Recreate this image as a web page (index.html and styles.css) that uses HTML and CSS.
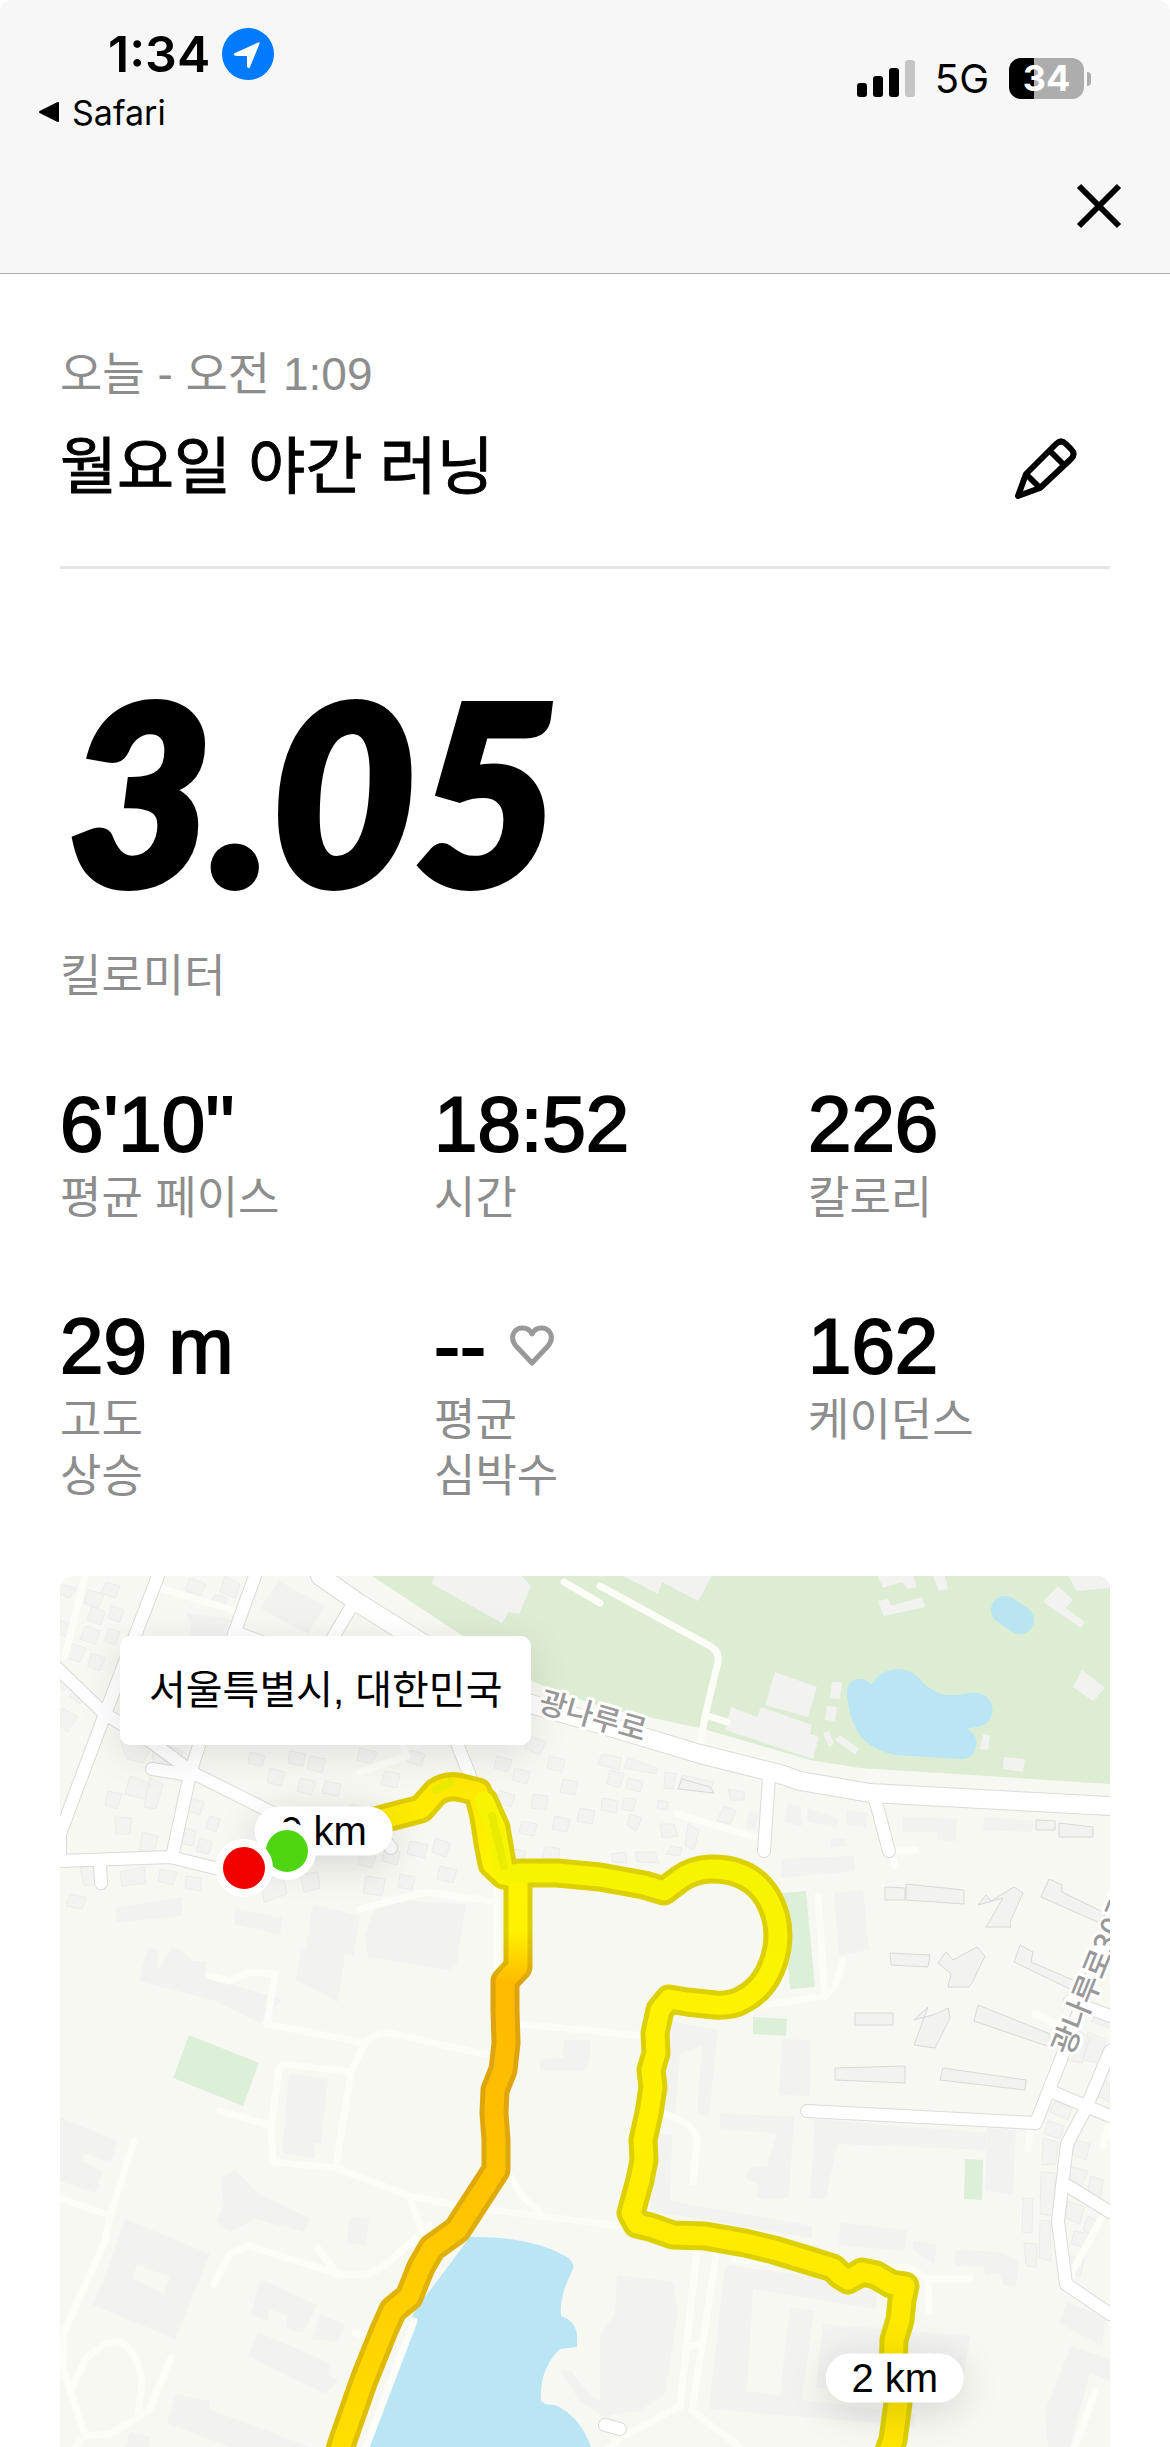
FILE: index.html
```html
<!DOCTYPE html>
<html lang="ko">

<head>
    <meta charset="UTF-8">
    <meta name="viewport" content="width=device-width, initial-scale=1.0">
    <title>월요일 야간 러닝</title>
    <link rel="stylesheet" href="styles.css">
</head>

<body>
    <header class="header">
        <div class="status">
            <div class="status-left">
                <div class="time">
                    <span>1:34</span>
                    <svg class="location" viewBox="0 0 52 52">
                        <circle cx="26" cy="26" r="26" fill="#007aff" />
                        <path d="M13 25 35 15Q39 13 37 17L28 39Q26 42 25 38V28H14Q10 27 13 25Z" fill="#fff" />
                    </svg>
                </div>
                <a class="back" href="#">
                    <svg class="back-icon" viewBox="0 0 22 22">
                        <path d="M2 11 20 2V20Z" fill="#000" stroke="#000" stroke-width="2" stroke-linejoin="round" />
                    </svg>
                    <span>Safari</span>
                </a>
            </div>
            <div class="status-right">
                <svg class="signal" viewBox="0 0 58 38">
                    <rect x="0" y="24" width="10" height="14" rx="3" />
                    <rect x="16" y="17" width="10" height="21" rx="3" />
                    <rect x="32" y="9" width="10" height="29" rx="3" />
                    <rect x="48" y="1" width="10" height="37" rx="3" fill="#c5c5c5" />
                </svg>
                <span class="network">5G</span>
                <span class="battery">34</span>
            </div>
        </div>
        <nav class="nav">
            <button class="icon-btn" type="button" aria-label="닫기">
                <svg viewBox="0 0 64 64">
                    <path d="M12 12 52 52M52 12 12 52" fill="none" stroke="#000" stroke-width="6" />
                </svg>
            </button>
        </nav>
    </header>

    <main class="main">
        <section class="title-box">
            <p class="date">오늘 - 오전 1:09</p>
            <div class="title-row">
                <h1 class="title">월요일 야간 러닝</h1>
                <button class="icon-btn" type="button" aria-label="이름 수정">
                    <svg viewBox="0 0 64 64">
                        <path d="M4 60 12 38 42 8Q47 3 52 8L57 13Q62 18 57 23L26 52ZM12 38 26 52M35 14 51 30" fill="none" stroke="#000" stroke-width="6" stroke-linejoin="round" />
                        <path d="M2 62 5 51 14 59Z" />
                    </svg>
                </button>
            </div>
        </section>

        <section class="distance">
            <p class="distance-num">3.05</p>
            <p class="label">킬로미터</p>
        </section>

        <section class="stats">
            <div class="stat">
                <p class="num">6'10''</p>
                <p class="label">평균 페이스</p>
            </div>
            <div class="stat">
                <p class="num">18:52</p>
                <p class="label">시간</p>
            </div>
            <div class="stat">
                <p class="num">226</p>
                <p class="label">칼로리</p>
            </div>
            <div class="stat">
                <p class="num">29 m</p>
                <p class="label">고도<br>상승</p>
            </div>
            <div class="stat">
                <p class="num">--
                    <svg class="heart" viewBox="0 0 44 42">
                        <path d="M22 38 6 21C-2 11 6 2 13 3Q19 3 22 9Q25 3 31 3C38 2 46 11 38 21Z" fill="none" stroke="#999" stroke-width="5" stroke-linejoin="round" />
                    </svg>
                </p>
                <p class="label">평균<br>심박수</p>
            </div>
            <div class="stat">
                <p class="num">162</p>
                <p class="label">케이던스</p>
            </div>
        </section>

        <section class="map">
            <svg class="map-svg" viewBox="0 0 1050 871">
                <defs>
                    <linearGradient id="pace" gradientUnits="userSpaceOnUse" x1="0" y1="200" x2="0" y2="871">
                        <stop offset="0" stop-color="#ffe600" />
                        <stop offset=".15" stop-color="#fff500" />
                        <stop offset=".23" stop-color="#fff200" />
                        <stop offset=".31" stop-color="#ffb900" />
                        <stop offset=".6" stop-color="#ffc200" />
                        <stop offset="1" stop-color="#ffdf00" />
                    </linearGradient>
                    <linearGradient id="pace-edge" gradientUnits="userSpaceOnUse" x1="0" y1="200" x2="0" y2="871">
                        <stop offset="0" stop-color="#dfcb00" />
                        <stop offset=".23" stop-color="#dcd000" />
                        <stop offset=".31" stop-color="#dfa20c" />
                        <stop offset=".6" stop-color="#dfa90a" />
                        <stop offset="1" stop-color="#dfc104" />
                    </linearGradient>
                    <linearGradient id="pace2" gradientUnits="userSpaceOnUse" x1="0" y1="290" x2="0" y2="871">
                        <stop offset="0" stop-color="#f6f400" />
                        <stop offset=".3" stop-color="#fff200" />
                        <stop offset="1" stop-color="#ffe500" />
                    </linearGradient>
                </defs>

                <!-- 公園、草地 -->
                <path class="park" d="M312 0H1050V208L800 192 750 184 640 152 540 131 474 106 400 58Z" />
                <path class="grass" d="M129 459 199 487 183 530 113 502Z" />
                <path class="grass" d="M722 317 746 315 755 411 730 413Z" />
                <path class="grass" d="M693 441 727 443 726 460 693 458Z" />
                <path class="grass" d="M905 583 923 584 922 624 904 623Z" />

                <!-- 水 -->
                <path class="water" d="M410 661Q470 660 505 680 515 686 513 693 499 720 501 740 514 744 517 757V771L500 773Q479 793 481 825 484 829 495 829 520 840 531 871H304L354 736Z" />
                <path class="water" d="M787 120C785 101 805 99 811 109 825 87 852 90 863 107 880 122 891 120 911 117 935 114 940 144 921 150L906 153C922 157 919 183 902 183L836 179C800 172 791 150 787 120Z" />
                <path d="M945 34 960 44" fill="none" stroke="#b9e5f3" stroke-width="28" stroke-linecap="round" />

                <!-- 建物 -->
                <g class="building">
                    <path d="M375 0 372 8 442 47 449 36 459 38 471 10 462 0Z" />
                    <path d="M563 0 598 18 602 6 638 25 652 0Z" />
                    <path d="M818 0 823 12 842 6 848 13 857 11 853 0ZM873 0 879 15 888 13 885 0ZM1008 0 1017 15 1050 12V0Z" />
                    <path d="M818 25 828 23 831 30 862 21 865 31 824 40Z" />
                    <path d="M998 10 1013 24 1006 32 1025 46 1021 52 983 26Z" />
                    <path d="M1022 94 1045 112 1033 125 1013 111Z" />
                    <path d="M715 96 757 111 748 141 705 129Z" />
                    <path d="M671 131 697 141 701 131 752 149 750 158 759 161 753 183 665 154Z" />
                    <path d="M772 106 782 106 780 123 770 122ZM767 130 777 131 775 145 765 144ZM763 157 769 155 774 168 769 171ZM780 159 799 173 795 178 775 164ZM923 158 930 159 928 174 920 173ZM944 181 965 183 963 196 943 193Z" />
                    <path d="M219 5 265 30 248 58 200 32Z" />
                    <path d="M125 37 170 43 158 80H130L131 45Z" />
                    <path d="M253 328 300 340 294 379H285L278 426 236 404 241 374 246 373Z" />
                    <path d="M318 323 406 328 397 387 389 394 308 381 304 360Z" />
                    <path d="M88 372 98 374 97 396 111 371 121 373 133 385H146L145 400 222 424 200 447 153 424 79 405Z" />
                    <path d="M55 332 122 321V340L57 346ZM175 332 222 342 220 359 174 348Z" />
                    <path d="M229 498 268 502 261 567H254L255 582 222 578Z" />
                    <path d="M0 541 57 565 51 587 24 577 22 585 42 595 36 617 0 605Z" />
                    <path d="M65 643 150 678 115 763 33 729 48 693ZM77 689 72 702 104 718 110 701Z" />
                    <path d="M160 602 175 594 200 619 250 642 245 656 195 643 170 656 157 645 164 628Z" />
                    <path d="M289 641 309 643 306 670 287 667Z" />
                    <path d="M200 703 257 729 243 757 227 752V740L209 733 208 745 191 738ZM260 738 285 749 278 765 252 764Z" />
                    <path d="M198 756 270 787 268 799 278 804 266 818 188 780Z" />
                    <path d="M116 818 149 825V833L250 871H170L107 847ZM70 856 90 861 88 871H65Z" />
                    <path d="M500 794 511 795 532 822 550 829V845L520 825Z" />
                    <path d="M504 464 530 464V479L526 494 480 495V483L503 482Z" />
                    <path d="M610 445 658 454 649 540 637 538 642 470 620 478 615 540 600 538Z" />
                    <path d="M722 463 751 464 750 520 719 519Z" />
                    <path d="M660 538 734 540 729 622H697V608L685 602 690 591 707 590 717 557 660 554Z" />
                    <path d="M755 543 926 557V574L778 568 765 623 750 622Z" />
                    <path d="M927 552 956 554 953 618 925 615Z" />
                    <path d="M597 558 612 559 610 625 752 650V662L590 635Z" />
                    <path d="M780 647 847 654 844 675 779 669Z" />
                    <path d="M853 664 877 669 874 688 853 674ZM895 674 940 676 959 686 956 710 943 709 940 697 925 700 924 691 895 690Z" />
                    <path d="M665 689 817 710 816 733 693 713 687 815 720 820 730 731 754 735 742 824 856 838 854 850 649 833Z" />
                    <path d="M763 748 910 760 905 797 870 775 858 782 853 817 756 812Z" />
                    <path d="M557 699 613 706 618 738 605 818 580 835 540 840V760L555 738Z" />
                    <path d="M1007 726 1046 742 1042 770 999 747ZM1011 770 1050 783V805L1030 796 1010 871H988L985 835Z" />
                    <path d="M722 283 794 280 795 295 721 302ZM774 317 803 314 809 374 779 379Z" />
                    <path d="M843 241 897 243 896 265 877 264V256L843 256ZM924 241 974 245 972 256 923 254Z" />
                    <path d="M728 227 741 230 742 250 724 246ZM748 232 779 243 776 252 746 245ZM787 234 808 237 806 251 786 249ZM771 262 785 263 786 270 771 271ZM690 234 699 237 694 254 685 252Z" />
                </g>

                <!-- 住宅區小建物 -->
                <g class="house">
                    <path d="M0 8 16 12 10 22 0 18ZM28 14 44 18 38 32 24 27ZM32 30 45 36 41 49 27 44ZM0 44 12 49 8 62 0 58ZM26 50 40 55 35 68 20 63ZM12 68 26 72 20 86 5 81ZM46 6 60 10 55 22 41 17ZM52 30 64 34 60 46 48 42ZM49 52 60 56 55 69 44 65Z" />
                    <path d="M31 77 45 82 40 95 28 90ZM2 96 14 104 5 114 0 110ZM18 110 29 119 20 128 9 120ZM2 132 17 140 8 156 0 150ZM130 2 146 8 140 20 125 14ZM165 0 180 8 176 22 160 16ZM155 18 168 22 162 34 149 30Z" />
                    <path d="M60 165 91 172 83 187 67 183ZM92 164 123 175 118 195 93 189ZM70 200 90 207 84 223 65 218ZM90 202 103 208 96 233 84 231ZM48 215 62 218 57 233 45 229ZM55 241 72 242 70 258 56 258ZM130 222 144 226 140 239 128 235ZM150 240 160 243 156 256 146 252ZM120 251 136 255 133 270 119 267ZM82 256 98 260 94 276 80 274ZM140 262 152 266 149 278 136 275Z" />
                    <path d="M20 292 44 288 46 306 24 310ZM60 296 84 291 86 307 62 310ZM100 293 117 296 113 309 98 305ZM126 300 142 302 140 315 125 312ZM10 318 26 322 22 333 6 330ZM202 303 223 300 227 318 204 326ZM240 298 258 296 260 312 244 316Z" />
                    <path d="M230 175 246 178 243 190 228 187ZM250 180 266 183 262 197 247 193ZM210 192 225 196 221 210 207 206ZM190 176 205 180 202 190 188 187ZM240 202 256 206 251 219 237 215ZM265 205 281 208 278 220 262 217ZM300 172 317 176 312 188 297 184ZM325 195 340 198 337 212 321 208ZM350 174 365 178 361 190 347 186ZM290 228 306 232 301 244 288 240Z" />
                    <path d="M300 276 316 280 312 292 298 288ZM325 272 340 276 337 289 322 285ZM350 265 368 269 364 282 347 278ZM375 262 390 267 386 281 372 276ZM306 300 325 303 322 320 303 317ZM340 298 355 301 352 314 338 311ZM380 290 397 294 393 307 377 303Z" />
                    <path d="M437 180 452 184 448 196 434 192ZM470 160 486 166 480 179 465 172ZM455 192 470 196 467 208 452 204ZM490 180 505 184 502 196 487 192ZM440 215 455 219 451 231 437 227ZM473 218 488 220 486 234 471 232ZM503 203 518 206 515 219 500 216ZM462 245 477 248 474 260 459 257ZM495 240 510 243 507 256 492 253ZM520 232 535 235 532 248 517 245ZM450 272 466 275 462 287 448 284ZM485 270 500 273 498 285 482 282Z" />
                    <path d="M542 178 562 182 559 194 538 188ZM568 182 597 192 597 198 564 192ZM550 194 564 198 560 212 547 208ZM568 202 583 206 580 216 566 212ZM605 196 616 198 613 213 604 212ZM622 199 654 206 651 212 619 211ZM542 222 558 225 556 237 541 234ZM564 222 576 223 573 236 562 233ZM598 224 608 226 607 234 597 232ZM570 238 582 242 576 255 567 249ZM600 248 614 248 618 260 602 262ZM628 248 639 254 634 274 625 270ZM612 270 622 272 620 280 606 278ZM552 278 566 276 567 287 552 286ZM575 276 595 276 599 287 577 286ZM668 213 684 216 684 224 671 224ZM664 230 676 235 670 248 657 245Z" />
                    <path d="M1005 470 1020 455 1030 462 1022 487 1007 484ZM1028 456 1046 464 1040 487 1023 484ZM995 525 1012 532 1008 544 990 536ZM988 545 1004 550 1000 563 984 558ZM983 562 998 566 996 588 982 589ZM1016 564 1030 568 1026 584 1012 578ZM1008 590 1028 595 1020 613 1010 604ZM1030 600 1043 604 1040 623 1028 618ZM981 596 995 597 993 640 980 638ZM963 622 973 623 972 657 962 656ZM980 644 990 645 991 685 979 682ZM964 667 977 668 976 691 966 690ZM1008 625 1024 631 1020 648 1006 642ZM1014 655 1030 658 1026 672 1011 668ZM1028 640 1040 646 1035 660 1023 654ZM1010 680 1024 684 1020 700 1007 695ZM1036 430 1050 436V452L1032 446ZM1040 500 1050 508V526L1037 520Z" />
                </g>

                <!-- 高樓陰影 -->
                <g class="tower">
                    <path d="M825 311 845 312V324H825ZM846 308 904 314V328L846 324Z" />
                    <path d="M830 377 870 379 868 391 831 389ZM795 437H833V449H795ZM775 492 845 490V507L775 504Z" />
                    <path d="M989 303 1002 309V316L1045 337 1042 348 981 321ZM960 369 973 376 971 386 1020 407 1012 414 954 386Z" />
                    <path d="M918 329 926 319 931 325 954 311 963 317 950 346 951 351H926L943 322Z" />
                    <path d="M878 387 886 376 893 384 917 371 925 380 913 405 909 411H888L891 398Z" />
                    <path d="M868 431 854 444 876 438 888 432 890 442 875 472 854 469Z" />
                    <path d="M918 429 990 458V471L914 445ZM883 492 966 504 965 514 880 504Z" />
                    <path d="M618 213 654 217 650 211 622 203ZM999 247 1033 251V261H999ZM976 244 995 245V254H976Z" />
                </g>

                <!-- 小路 -->
                <g class="path">
                    <path d="M540 10 650 70Q660 76 658 86L645 140 641 165M645 139 667 146" />
                    <path d="M504 6 540 27" />
                    <path d="M100 12 172 34M25 0 5 80M340 164 347 180 300 196M300 333 366 316 430 325M437 310V380 400" />
                    <path d="M617 238 694 261M834 275 830 260M835 274H855M828 260 835 290" />
                    <path d="M150 400 170 405 190 396 215 398 207 448 305 467Q315 455 330 457L445 483" />
                    <path d="M460 448 585 460" />
                    <path d="M305 467 291 496 276 590M291 496 225 488 219 492 211 552 213 586 276 592 350 620 400 630 560 650" />
                    <path d="M160 535 209 549M74 565 50 640 45 665 4 756 3 792 25 860 50 858 78 841 82 805Q76 772 60 766L45 768 27 781 10 815M78 841 89 835 111 782M0 622 45 638M20 865 15 871" />
                    <path d="M154 708 170 678 189 670 275 697Q303 704 325 689L370 650M277 698 258 672M350 622 362 656M450 600 462 620 480 636M295 757 305 760" />
                    <path d="M605 538Q640 550 637 569L633 606M758 320 765 420 650 437M765 420 775 410 783 384" />
                    <path d="M637 674 620 830M657 674 632 835M620 830 560 862M632 835 680 871M629 770H641M560 862 550 871" />
                    <path d="M675 684 850 692 868 703H910M868 703 869 735M970 556 968 573M1035 815 1015 871M975 438 1000 450M1048 630 1010 700M1049 548 1043 570" />
                    <path d="M354 745 306 871" />
                </g>

                <!-- 道路: 外框 + 白色 -->
                <g class="road-edge">
                    <path class="wide" d="M260 0 300 28 380 78 450 122 540 148 640 178 720 198 740 205 810 217 1050 230" />
                    <path d="M98 0 45 138 0 258V285L110 281 175 297M-5 90 45 138 90 165 135 198 215 238M195 0 175 55 130 198 112 281M294 26 262 80M40 288 41 307M92 193 130 199M180 58 240 80M394 160 412 205M324 263 331 272" />
                    <path d="M709 202 704 275M814 219 829 275M747 535 976 547 1010 460 1050 350M1050 440 1010 425M990 515 1050 540M1050 475 1027 530 1007 568 998 645 1006 708 1050 738M1008 610 1050 636M545 849 560 853" />
                </g>
                <g class="road">
                    <path class="wide" d="M260 0 300 28 380 78 450 122 540 148 640 178 720 198 740 205 810 217 1050 230" />
                    <path d="M98 0 45 138 0 258V285L110 281 175 297M-5 90 45 138 90 165 135 198 215 238M195 0 175 55 130 198 112 281M294 26 262 80M40 288 41 307M92 193 130 199M180 58 240 80M394 160 412 205M324 263 331 272" />
                    <path d="M709 202 704 275M814 219 829 275M747 535 976 547 1010 460 1050 350M1050 440 1010 425M990 515 1050 540M1050 475 1027 530 1007 568 998 645 1006 708 1050 738M1008 610 1050 636M545 849 560 853" />
                </g>

                <text class="road-name" transform="translate(477 135) rotate(16)">광나루로</text>
                <text class="road-name" transform="translate(1011 481) rotate(-68)">광나루로30길</text>

                <!-- 跑步路線 -->
                <g class="route">
                    <path stroke="url(#pace-edge)" stroke-width="29" d="M311 246 361 233 376 216Q388 208 402 212L418 216 424 241 428 267 432 288 444 299 458 302V391L445 405V434L446 467 443 494 435 514 434 537 436 564V594L397 654 372 672 361 691 349 721 333 734 324 754 304 804 283 864 275 890" />
                    <path stroke="#dcd000" stroke-width="29" d="M424 225 436 252 444 299 461 297H497L540 301 584 309 604 315 620 303Q632 294 650 293 690 292 708 322 721 345 717 372 710 410 682 424 672 430 655 429L627 426 609 423 600 434 595 457 596 477 591 494 593 511 589 537 583 564 584 584 580 604 571 637 577 648 590 651 613 659 645 660 685 667 714 674 747 684 773 692 780 699 788 704 802 696 816 699 831 708 845 710 842 724 840 744 834 764 833 801 838 827 833 864 825 885" />
                    <path stroke="url(#pace)" stroke-width="19" d="M311 246 361 233 376 216Q388 208 402 212L418 216 424 241 428 267 432 288 444 299 458 302V391L445 405V434L446 467 443 494 435 514 434 537 436 564V594L397 654 372 672 361 691 349 721 333 734 324 754 304 804 283 864 275 890" />
                    <path stroke="url(#pace2)" stroke-width="19" d="M424 225 436 252 444 299 461 297H497L540 301 584 309 604 315 620 303Q632 294 650 293 690 292 708 322 721 345 717 372 710 410 682 424 672 430 655 429L627 426 609 423 600 434 595 457 596 477 591 494 593 511 589 537 583 564 584 584 580 604 571 637 577 648 590 651 613 659 645 660 685 667 714 674 747 684 773 692 780 699 788 704 802 696 816 699 831 708 845 710 842 724 840 744 834 764 833 801 838 827 833 864 825 885" />
                    <path stroke="#e9ec00" stroke-width="8" d="M376 214 390 206M432 240 444 290" />
                </g>
            </svg>
            <p class="place">서울특별시, 대한민국</p>
            <span class="km km-0">0 km</span>
            <span class="km km-2">2 km</span>
            <span class="pin pin-start"></span>
            <span class="pin pin-end"></span>
        </section>
    </main>
</body>

</html>
```

FILE: styles.css
```css
* {
    margin: 0;
    padding: 0;
    box-sizing: border-box;
}

body {
    background: #fff;
    color: #000;
    font-family: "Liberation Sans", "Noto Sans CJK KR", sans-serif;
}

svg {
    display: block;
}

/* 狀態列 */
.header {
    background: #f7f7f7;
    border-bottom: 1px solid #b0b0b0;
    border-radius: 12px 12px 0 0;
    font-family: Inter, sans-serif;
}

.status {
    display: flex;
    justify-content: space-between;
    padding: 26px 78px 0 38px;
}

.time {
    display: flex;
    align-items: center;
    gap: 12px;
    height: 56px;
    padding-left: 70px;
    font-size: 50px;
    font-weight: 600;
}

.location {
    width: 52px;
    height: 52px;
}

.back {
    display: flex;
    align-items: center;
    gap: 12px;
    height: 40px;
    margin-top: 10px;
    color: #000;
    font-size: 34px;
    text-decoration: none;
}

.back-icon {
    width: 22px;
    height: 22px;
}

.status-right {
    display: flex;
    align-items: center;
    gap: 20px;
    height: 104px;
}

.signal {
    width: 58px;
    height: 38px;
}

.network {
    font-size: 40px;
}

.battery {
    width: 75px;
    height: 41px;
    margin-right: 8px;
    border-radius: 12px;
    background: linear-gradient(to right, #000 34%, #adadad 34%);
    color: #fff;
    font-size: 36px;
    font-weight: 700;
    line-height: 41px;
    text-align: center;
    position: relative;
}

.battery::after {
    content: "";
    position: absolute;
    width: 4px;
    height: 14px;
    top: 14px;
    right: -7px;
    background: #adadad;
    border-radius: 0 4px 4px 0;
}

.nav {
    display: flex;
    justify-content: flex-end;
    padding: 42px 39px 35px;
}

.icon-btn {
    width: 64px;
    height: 64px;
    border: none;
    background: none;
}

/* 標題 */
.main {
    padding: 68px 60px 0;
}

.title-box {
    padding-bottom: 58px;
    border-bottom: 3px solid #e5e5e5;
}

.date {
    color: #8d8d8d;
    font-size: 46px;
    line-height: 64px;
}

.title-row {
    display: flex;
    align-items: center;
    justify-content: space-between;
    height: 80px;
    margin-top: 22px;
    padding-right: 32px;
}

.title {
    font-size: 62px;
    font-weight: 400;
    line-height: 80px;
    -webkit-text-stroke: 1px #000;
}

/* 距離 */
.distance {
    padding-top: 92px;
}

.distance-num {
    margin-bottom: 32px;
    padding-left: 8px;
    font-family: Lato, sans-serif;
    font-size: 248px;
    font-style: italic;
    font-weight: 900;
    line-height: 256px;
    -webkit-text-stroke: 8px #000;
}

.label {
    color: #8d8d8d;
    font-size: 45px;
    line-height: 56px;
}

/* 數據 */
.stats {
    display: grid;
    grid-template-columns: repeat(3, 1fr);
    gap: 72px;
    margin: 72px 0 71px;
}

.num {
    display: flex;
    align-items: center;
    gap: 24px;
    font-size: 78px;
    line-height: 94px;
    -webkit-text-stroke: 2px #000;
}

.heart {
    width: 44px;
    height: 42px;
}

/* 地圖 */
.map {
    border-radius: 14px 14px 0 0;
    overflow: hidden;
    position: relative;
}

.map-svg {
    width: 100%;
    background: #f7f8f2;
}

.park {
    fill: #dcedd3;
}

.grass {
    fill: #dcefd9;
}

.water {
    fill: #b9e5f4;
}

.building {
    fill: #f2f2f1;
    fill-rule: evenodd;
}

.house {
    fill: #f3f3f2;
    stroke: #ececea;
    stroke-width: 1px;
}

.tower {
    fill: #f2f2f1;
    stroke: #d8d8d6;
    stroke-width: 1px;
}

.path,
.road-edge,
.road,
.route {
    fill: none;
    stroke-linecap: round;
    stroke-linejoin: round;
}

.path {
    stroke: #fdfdf8;
    stroke-width: 7px;
}

.road-edge {
    stroke: #dddad8;
    stroke-width: 14px;
}

.road-edge .wide {
    stroke-width: 20px;
}

.road {
    stroke: #fff;
    stroke-width: 12px;
}

.road .wide {
    stroke-width: 18px;
}

.road-name {
    fill: #999;
    font-family: "Noto Sans CJK KR", sans-serif;
    font-size: 30px;
    font-weight: 500;
    stroke: #fff;
    stroke-width: 6px;
    stroke-linejoin: round;
    paint-order: stroke;
}

.place {
    position: absolute;
    top: 60px;
    left: 60px;
    padding: 0 29px;
    border-radius: 10px;
    background: #fff;
    box-shadow: 0 8px 40px rgba(0, 0, 0, 0.1);
    font-size: 40px;
    line-height: 109px;
}

.km {
    position: absolute;
    padding: 0 26px;
    border-radius: 25px;
    background: #fff;
    box-shadow: 0 8px 40px rgba(0, 0, 0, 0.14);
    font-size: 40px;
    line-height: 49px;
    transform: translate(-50%, -50%);
}

.km-0 {
    top: 29.3%;
    left: 25.1%;
}

.km-2 {
    top: 92.1%;
    left: 79.5%;
}

.pin {
    position: absolute;
    width: 58px;
    height: 58px;
    border: 8px solid #fff;
    border-radius: 50%;
    transform: translate(-50%, -50%);
}

.pin-start {
    top: 31.6%;
    left: 21.6%;
    background: #50d513;
}

.pin-end {
    top: 33.5%;
    left: 17.5%;
    background: #f20000;
}
```
